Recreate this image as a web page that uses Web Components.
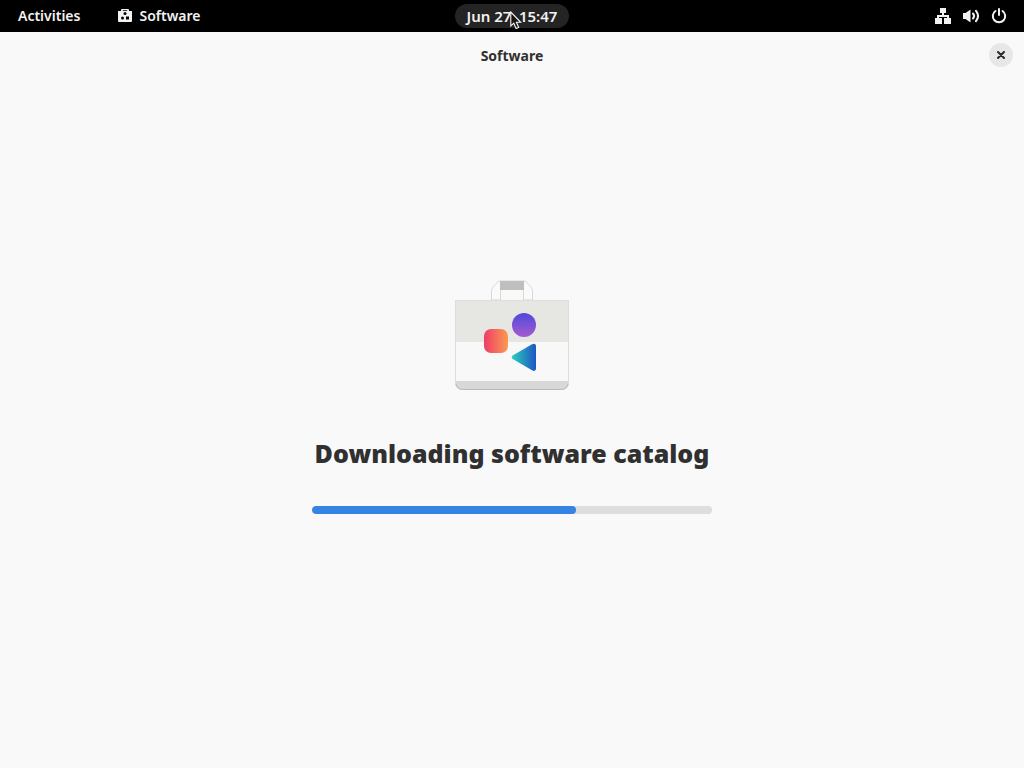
<!DOCTYPE html>
<html lang="en">
<head>
<meta charset="utf-8">
<meta name="viewport" content="width=device-width, initial-scale=1">
<title>Software</title>
<style>
html, body { height: 100%; margin: 0; }
body { font-family: "Noto Sans", "Open Sans", sans-serif; font-size: 14px; background: #f9f9f9; color: #303030; }
</style>
</head>
<body>
<desktop-shell></desktop-shell>
<script>
function define(name, html) {
  const template = document.createElement('template');
  template.innerHTML = html;
  customElements.define(name, class extends HTMLElement {
    constructor() {
      super();
      this.attachShadow({ mode: 'open' }).append(template.content.cloneNode(true));
    }
  });
}

define('panel-button', `
<style>
:host { display: block; }
button { display: flex; align-items: center; gap: 6px; height: 24px; padding: 0 12px; border: 0; border-radius: 12px;
  background: var(--panel-fill, transparent); color: inherit; font: inherit; font-weight: 600; line-height: 24px; white-space: pre; }
</style>
<button type="button"><slot name="icon"></slot><slot></slot></button>`);

define('mouse-pointer', `
<style>:host { position: absolute; left: 55px; top: 7px; pointer-events: none; } svg { display: block; }</style>
<svg width="12" height="19" viewBox="0 0 12 19" aria-hidden="true"><path d="M.8 1v14l3-2.8 2.3 5.3 2.6-1.1-2.3-5.1h4.3z" fill="#151515" stroke="#f4f4f4" stroke-width="1.1"/></svg>`);

define('top-panel', `
<style>
:host { display: grid; grid-template-columns: 1fr auto 1fr; align-items: center; height: 32px; background: #000; color: #f2f2f2; }
.left { display: flex; gap: 12px; padding-left: 6px; }
.clock { position: relative; font-size: 15px; --panel-fill: #242424; }
.status { display: flex; justify-self: end; gap: 12px; padding-right: 17px; }
svg { display: block; fill: currentColor; }
</style>
<div class="left">
  <panel-button>Activities</panel-button>
  <panel-button><svg slot="icon" width="17" height="16" viewBox="0 0 17 16" aria-hidden="true">
    <path d="M2 3h3V2q0-1 1-1h6q1 0 1 1v1h3v10q0 1-1 1H3q-1 0-1-1zM6.800 2.200V3h4.400v-.8z" fill-rule="evenodd"/>
    <g fill="#000"><circle cx="9" cy="5.500" r="1.500"/><circle cx="6.500" cy="10" r="1.500"/><path d="M10 8.500h3v3h-3z"/></g></svg>Software</panel-button>
</div>
<div class="clock"><panel-button>Jun 27&#8194;15:47</panel-button><mouse-pointer></mouse-pointer></div>
<div class="status">
  <svg width="16" height="16" viewBox="0 0 16 16" role="img" aria-label="Wired network"><path d="M5 0h6v5H9v2h5v3h2v6H9v-6h3V9H4v1h3v6H0v-6h2V7h5V5H5z"/></svg>
  <svg width="16" height="16" viewBox="0 0 16 16" role="img" aria-label="Volume"><path d="M0 5h2.500L7.500 1.500v13L2.500 11H0z"/><g fill="none" stroke="currentColor" stroke-width="2" stroke-linecap="round"><path d="M10 5.500q2.200 2.500 0 5"/><path d="M13 2.800q4 5.200 0 10.400"/></g></svg>
  <svg width="16" height="16" viewBox="0 0 16 16" role="img" aria-label="Power"><path d="M4.500 3A6.200 6.200 0 1 0 11.500 3M8 1v6" fill="none" stroke="currentColor" stroke-width="2" stroke-linecap="round"/></svg>
</div>`);

define('header-bar', `
<style>
:host { display: grid; grid-template-columns: 1fr auto 1fr; align-items: center; height: 46px; padding: 0 11px; }
h1 { grid-column: 2; margin: 0; padding-top: 2px; font-size: 14px; line-height: 20px; font-weight: 700; }
button { justify-self: end; display: grid; place-items: center; width: 24px; height: 24px; padding: 0; border: 0; border-radius: 50%; background: #e7e7e7; color: #292929; }
svg { display: block; }
</style>
<h1><slot></slot></h1>
<button type="button" aria-label="Close"><svg width="8" height="8" viewBox="0 0 8 8"><path d="M1 1l6 6M7 1L1 7" stroke="currentColor" stroke-width="2" stroke-linecap="round"/></svg></button>`);

define('software-icon', `
<style>:host { display: block; } svg { display: block; }</style>
<svg width="128" height="128" viewBox="0 0 128 128" role="img" aria-label="Software">
  <defs>
    <linearGradient id="red"><stop stop-color="#ee3d68"/><stop offset="1" stop-color="#fb9a51"/></linearGradient>
    <linearGradient id="violet" x2="0" y2="1"><stop stop-color="#5049dc"/><stop offset="1" stop-color="#a45bcf"/></linearGradient>
    <linearGradient id="teal"><stop stop-color="#2bd0bc"/><stop offset="1" stop-color="#1c55c4"/></linearGradient>
    <clipPath id="bag"><path d="M7 29h114v82q0 8-8 8H15q-8 0-8-8z"/></clipPath>
  </defs>
  <path d="M43.500 29V19.500Q44 16 51 10h26Q84 16 84.500 19.500V29h-9V18.500h-23V29z" fill="#fafafa" stroke="#d8d8d8"/>
  <path d="M52 10h24v9H52z" fill="#c0bfbd"/>
  <g clip-path="url(#bag)">
    <path d="M7 29h114v90H7z" fill="#f8f8f8"/>
    <path d="M7 29h114v42H7z" fill="#e6e6e3"/>
    <path d="M7 110h114v9H7z" fill="#d8d8d7"/>
  </g>
  <path d="M7.500 29.500h113v81q0 8-8 8h-97q-8 0-8-8z" fill="none" stroke="#dededc"/>
  <path d="M8 113q1.500 5.500 7.500 5.500h97q6 0 7.500-5.500" fill="none" stroke="#b8b8b6"/>
  <rect x="36" y="58" width="24" height="24" rx="7" fill="url(#red)"/>
  <circle cx="76" cy="54" r="12" fill="url(#violet)"/>
  <path d="M64.700 84.500L84 73.300q4-2 4 2v22q0 4-4 2L64.700 88q-2-1.700 0-3.500z" fill="url(#teal)"/>
</svg>`);

define('loading-page', `
<style>
:host { display: flex; flex-direction: column; align-items: center; justify-content: center; flex: 1; padding: 0 24px 61px; }
label { margin: 35px 0 34px; font-size: 25px; line-height: 38px; font-weight: 900; text-align: center; }
progress { appearance: none; display: block; width: 100%; max-width: 400px; height: 8px; border: 0; border-radius: 4px; overflow: hidden; background: #dedede; }
progress::-webkit-progress-bar { background: #dedede; border-radius: 4px; }
progress::-webkit-progress-value { background: #3584e4; border-radius: 4px; }
progress::-moz-progress-bar { background: #3584e4; border-radius: 4px; }
</style>
<software-icon></software-icon>
<label for="bar">Downloading software catalog</label>
<progress id="bar" value="66" max="100"></progress>`);

define('desktop-shell', `
<style>:host { display: flex; flex-direction: column; min-height: 100vh; }</style>
<top-panel></top-panel>
<header-bar>Software</header-bar>
<loading-page></loading-page>`);
</script>
</body>
</html>
